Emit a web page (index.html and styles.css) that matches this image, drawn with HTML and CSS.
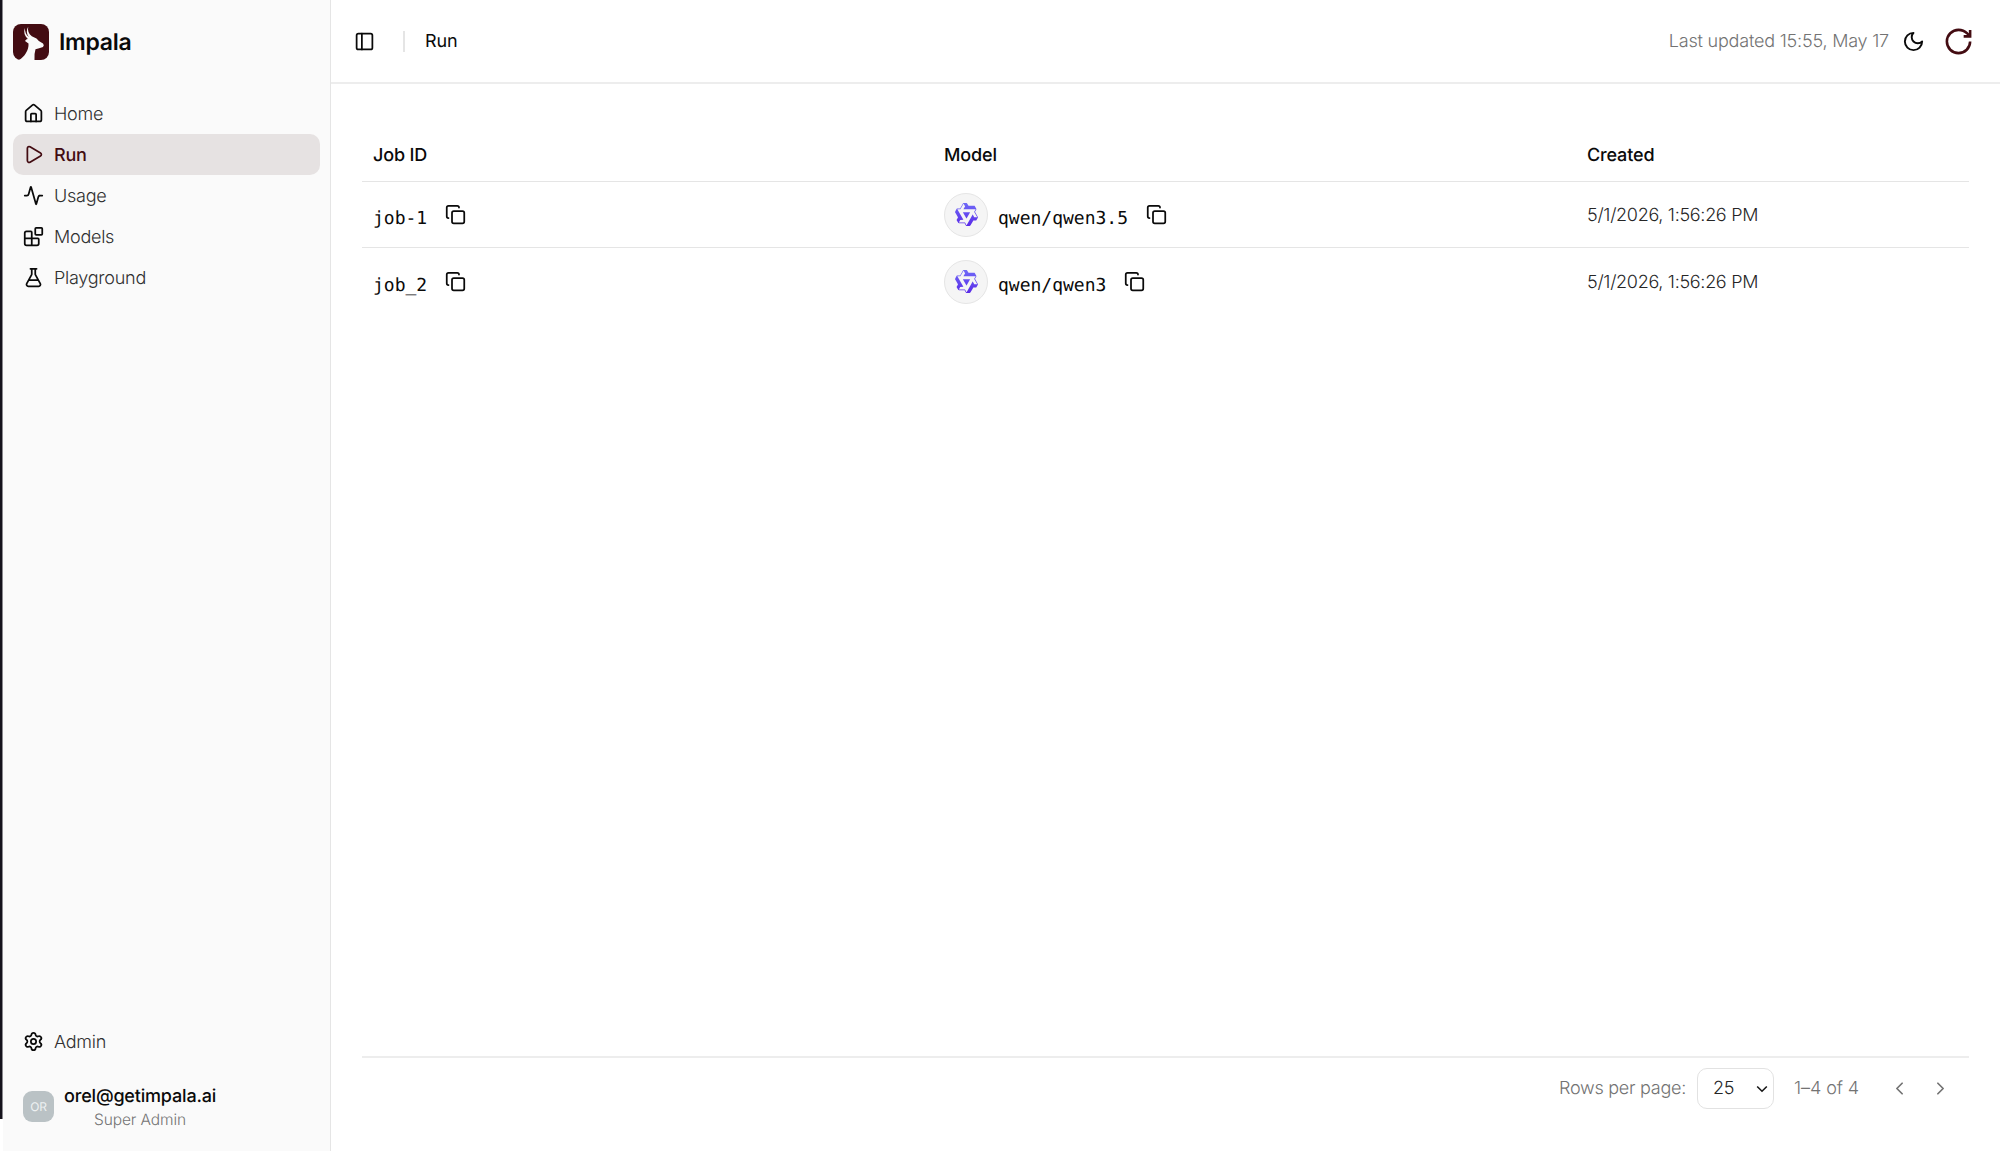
FILE: index.html
```html
<!DOCTYPE html>
<html lang="en">
<head>
<meta charset="utf-8">
<title>Impala – Run</title>
<link rel="stylesheet" href="styles.css">
</head>
<body>
<svg class="defs" width="0" height="0">
  <symbol id="copy" viewBox="0 0 24 24"><rect x="8" y="8" width="14" height="14" rx="2"/><path d="M4 16c-1.1 0-2-.9-2-2V4c0-1.1.9-2 2-2h10c1.1 0 2 .9 2 2"/></symbol>
  <symbol id="qwen" viewBox="0 0 24 24"><path d="M12.604 1.34c.393.69.784 1.382 1.174 2.075a.18.18 0 00.157.091h5.552c.174 0 .322.11.446.327l1.454 2.57c.19.337.24.478.024.837-.26.43-.513.864-.76 1.3l-.367.658c-.106.196-.223.28-.04.512l2.652 4.637c.172.301.111.494-.043.77-.437.785-.882 1.564-1.335 2.34-.159.272-.352.375-.68.37-.777-.016-1.552-.01-2.327.016a.099.099 0 00-.081.05 575.097 575.097 0 01-2.705 4.74c-.169.293-.38.363-.725.364-.997.003-2.002.004-3.017.002a.537.537 0 01-.465-.271l-1.335-2.323a.09.09 0 00-.083-.049H4.982c-.285.03-.553-.001-.805-.092l-1.603-2.77a.543.543 0 01-.002-.54l1.207-2.12a.198.198 0 000-.197 550.951 550.951 0 01-1.875-3.272l-.79-1.395c-.16-.31-.173-.496.095-.965.465-.813.927-1.625 1.387-2.436.132-.234.304-.334.584-.335a338.3 338.3 0 012.589-.001.124.124 0 00.107-.063l2.806-4.895a.488.488 0 01.422-.246c.524-.001 1.053 0 1.583-.006L11.704 1c.341-.003.724.032.9.34zm-3.432.403a.06.06 0 00-.052.03L6.254 6.788a.157.157 0 01-.135.078H3.253c-.056 0-.07.025-.041.074l5.81 10.156c.025.042.013.062-.034.063l-2.795.015a.218.218 0 00-.2.116l-1.32 2.31c-.044.078-.021.118.068.118l5.716.008c.046 0 .08.02.104.061l1.403 2.454c.046.081.092.082.139 0l5.006-8.76.783-1.382a.055.055 0 01.096 0l1.424 2.53a.122.122 0 00.107.062l2.763-.02a.04.04 0 00.035-.02.041.041 0 000-.04l-2.9-5.086a.108.108 0 010-.113l.293-.507 1.12-1.977c.024-.041.012-.062-.035-.062H9.2c-.059 0-.073-.026-.043-.077l1.434-2.505a.107.107 0 000-.114L9.225 1.774a.06.06 0 00-.053-.031zm6.29 8.02c.046 0 .058.02.034.06l-.832 1.465-2.613 4.585a.056.056 0 01-.05.029.058.058 0 01-.05-.029L8.498 9.841c-.02-.034-.01-.052.028-.054l.216-.012 6.722-.012z"/></symbol>
  <linearGradient id="violet" x1="0" y1="0" x2="0" y2="1"><stop offset="0" stop-color="#6f69f7"/><stop offset="1" stop-color="#5a2be8"/></linearGradient>
</svg>
<div class="app">
  <div class="edge"></div>
  <aside class="sidebar">
    <div class="brand">
      <svg class="logo" viewBox="0 0 36 36"><rect width="36" height="36" rx="8" fill="#430c12"/><path fill="#fafafa" d="M15.200 2.800C14.500 6.500 15.500 9.800 18.800 12.200L23.500 14.500Q25 17 30 19.500Q31.600 21 30 23Q26 24.600 22.500 25.200Q21 30 21.500 36H6C11.500 33 16 26 15.500 19.500L12 17Q13 15.200 14.800 15C11.500 12 10.500 8 11.800 4C12 8 13 11 15.800 13C13.400 10 13.200 6 15.200 2.800Z"/></svg>
      <span class="brand-name">Impala</span>
    </div>
    <nav class="nav">
      <a class="item"><svg class="icon" viewBox="0 0 24 24"><path d="M15 21v-8a1 1 0 0 0-1-1h-4a1 1 0 0 0-1 1v8"/><path d="M3 10a2 2 0 0 1 .709-1.528l7-6a2 2 0 0 1 2.582 0l7 6A2 2 0 0 1 21 10v9a2 2 0 0 1-2 2H5a2 2 0 0 1-2-2z"/></svg><span>Home</span></a>
      <a class="item active"><svg class="icon" viewBox="0 0 24 24"><path d="M5 5a2 2 0 0 1 3.008-1.728l11.997 6.998a2 2 0 0 1 .003 3.458l-12 7A2 2 0 0 1 5 19z"/></svg><span>Run</span></a>
      <a class="item"><svg class="icon" viewBox="0 0 24 24"><path d="M22 12h-2.480a2 2 0 0 0-1.930 1.460l-2.350 8.360a.25.25 0 0 1-.48 0L9.240 2.180a.25.25 0 0 0-.48 0l-2.350 8.360A2 2 0 0 1 4.490 12H2"/></svg><span>Usage</span></a>
      <a class="item"><svg class="icon" viewBox="0 0 24 24"><path d="M10 22V7a1 1 0 0 0-1-1H4a2 2 0 0 0-2 2v12a2 2 0 0 0 2 2h12a2 2 0 0 0 2-2v-5a1 1 0 0 0-1-1H2"/><rect x="14" y="2" width="8" height="8" rx="1"/></svg><span>Models</span></a>
      <a class="item"><svg class="icon" viewBox="0 0 24 24"><path d="M14 2v6a2 2 0 0 0 .245.960l5.510 10.080A2 2 0 0 1 18 22H6a2 2 0 0 1-1.755-2.960l5.510-10.080A2 2 0 0 0 10 8V2M6.453 15h11.094M8.500 2h7"/></svg><span>Playground</span></a>
    </nav>
    <a class="item admin"><svg class="icon" viewBox="0 0 24 24"><path d="M9.671 4.136a2.340 2.340 0 0 1 4.659 0 2.340 2.340 0 0 0 3.319 1.915 2.340 2.340 0 0 1 2.330 4.033 2.340 2.340 0 0 0 0 3.831 2.340 2.340 0 0 1-2.330 4.033 2.340 2.340 0 0 0-3.319 1.915 2.340 2.340 0 0 1-4.659 0 2.340 2.340 0 0 0-3.320-1.915 2.340 2.340 0 0 1-2.330-4.033 2.340 2.340 0 0 0 0-3.831A2.340 2.340 0 0 1 6.350 6.051a2.340 2.340 0 0 0 3.319-1.915"/><circle cx="12" cy="12" r="3"/></svg><span>Admin</span></a>
    <div class="user">
      <div class="avatar">OR</div>
      <div class="who"><span class="email">orel@getimpala.ai</span><span class="role">Super Admin</span></div>
    </div>
  </aside>
  <main class="main">
    <header class="top">
      <svg class="icon" viewBox="0 0 24 24"><rect x="3" y="3" width="18" height="18" rx="2"/><path d="M9 3v18"/></svg>
      <span class="sep"></span>
      <span class="crumb">Run</span>
      <span class="updated">Last updated 15:55, May 17</span>
      <svg class="icon moon" viewBox="0 0 24 24"><path d="M12 3a6 6 0 0 0 9 9 9 9 0 1 1-9-9Z"/></svg>
      <svg class="refresh" viewBox="0 0 24 24"><path d="M21 12a9 9 0 1 1-9-9c2.520 0 4.930 1 6.740 2.740L21 8"/><path d="M21 3v5h-5"/></svg>
    </header>
    <section class="content">
      <div class="table">
        <div class="row head"><div>Job ID</div><div>Model</div><div>Created</div></div>
        <div class="row">
          <div class="cell"><code>job-1</code><svg class="icon"><use href="#copy"/></svg></div>
          <div class="cell"><span class="badge"><svg><use href="#qwen"/></svg></span><code>qwen/qwen3.5</code><svg class="icon"><use href="#copy"/></svg></div>
          <div class="cell date">5/1/2026, 1:56:26 PM</div>
        </div>
        <div class="row last">
          <div class="cell"><code>job_2</code><svg class="icon"><use href="#copy"/></svg></div>
          <div class="cell"><span class="badge"><svg><use href="#qwen"/></svg></span><code>qwen/qwen3</code><svg class="icon"><use href="#copy"/></svg></div>
          <div class="cell date">5/1/2026, 1:56:26 PM</div>
        </div>
      </div>
      <footer class="pager">
        <span class="label">Rows per page:</span>
        <div class="select"><span>25</span><svg viewBox="0 0 12 8"><path d="M1.200 1.500 6 6.200l4.800-4.700"/></svg></div>
        <span class="range">1–4 of 4</span>
        <span class="step"><svg class="icon" viewBox="0 0 24 24"><path d="m15 18-6-6 6-6"/></svg></span>
        <span class="step"><svg class="icon" viewBox="0 0 24 24"><path d="m9 18 6-6-6-6"/></svg></span>
      </footer>
    </section>
  </main>
</div>
</body>
</html>
```
FILE: styles.css
```css
* { box-sizing: border-box; }
body {
  margin: 0;
  background: #fff;
  color: #0a0a0a;
  font-family: Inter, "Liberation Sans", sans-serif;
  font-size: 18px;
  line-height: 26px;
  font-weight: 300;
  letter-spacing: -0.25px;
  text-rendering: geometricPrecision;
}
.defs { display: block; }
.app { display: flex; width: 2000px; height: 1151px; overflow: hidden; }
.edge { width: 3px; height: 1119px; flex: none; background: #15131c; border-right: 1px solid #8a898e; }
.sidebar {
  width: 328px;
  flex: none;
  display: flex;
  flex-direction: column;
  background: #fafafa;
  border-right: 1px solid #e5e5e5;
  padding: 0 10px 0 10px;
}
.icon {
  width: 21px;
  height: 21px;
  flex: none;
  fill: none;
  stroke: currentColor;
  stroke-width: 2;
  stroke-linecap: round;
  stroke-linejoin: round;
}
.brand { display: flex; align-items: center; gap: 10px; height: 83px; }
.logo { width: 36px; height: 36px; }
.brand-name { font-size: 23px; font-weight: 600; letter-spacing: -0.3px; }
.nav { flex: 1; padding-top: 10px; }
.item { display: flex; align-items: center; gap: 10px; height: 41px; padding-left: 10px; border-radius: 10px; color: #0a0a0a; }
.item span { color: #303030; padding-top: 2px; }
.item.active, .item.active span { color: #430c12; font-weight: 500; }
.active { background: #e6e2e2; }
.admin { flex: none; }
.user { display: flex; align-items: center; gap: 10px; height: 89px; padding: 0 0 1px 10px; }
.avatar {
  width: 31px; height: 31px; border-radius: 9px;
  background: #bac2c5; color: #eef1f2;
  font-size: 12px; font-weight: 400; line-height: 31px; text-align: center;
}
.who { display: flex; flex-direction: column; align-items: center; padding-top: 3px; }
.email { font-weight: 500; line-height: 23px; letter-spacing: -0.18px; }
.role { font-size: 15.5px; line-height: 23px; color: #737373; letter-spacing: -0.1px; }
.main { flex: 1; display: flex; flex-direction: column; min-width: 0; }
.top { display: flex; align-items: center; height: 84px; padding: 0 26px 0 23px; border-bottom: 2px solid #ededed; }
.sep { width: 2px; height: 21px; margin: 0 20px 0 28px; background: #e5e5e5; }
.crumb { font-weight: 400; padding-top: 2px; letter-spacing: -0.1px; }
.updated { margin-left: auto; padding-top: 2px; color: #737373; letter-spacing: -0.2px; }
.moon { width: 23px; height: 23px; margin-left: 13px; }
.refresh { width: 31px; height: 31px; margin-left: 18px; fill: none; stroke: #430c12; stroke-width: 2; }
.content { flex: 1; display: flex; flex-direction: column; padding: 46px 31px 0; }
.table { flex: 1; }
.row { display: grid; grid-template-columns: 571px 643px 1fr; height: 66px; border-bottom: 1px solid #e5e5e5; align-items: center; padding-left: 11px; }
.head { height: 52px; font-weight: 500; letter-spacing: -0.15px; }
.head div { padding-top: 1px; }
.last { border-bottom: 0; height: 67px; }
.cell { display: flex; align-items: center; }
.cell code { font: 400 18px/26px "DejaVu Sans Mono", "Liberation Mono", monospace; letter-spacing: 0; padding-top: 9px; margin-right: 18px; }
.badge { width: 44px; height: 44px; margin-right: 10px; border: 1px solid #e5e5e5; border-radius: 50%; background: #f5f5f5; display: flex; align-items: center; justify-content: center; }
.badge svg { width: 25px; height: 25px; fill: url(#violet); }
.date { color: #262626; letter-spacing: -0.3px; padding-top: 2px; }
.pager { display: flex; align-items: center; height: 95px; padding: 0 8px 32px 0; border-top: 2px solid #ededed; justify-content: flex-end; color: #737373; }
.select { display: flex; align-items: center; justify-content: space-between; width: 77px; height: 41px; margin: 0 20px 0 11px; padding: 0 5px 0 15px; border: 1px solid #e2e2e2; border-radius: 10px; color: #262626; }
.select svg { width: 12px; height: 8px; fill: none; stroke: #171717; stroke-width: 1.6; }
.label, .range { padding-top: 1px; }
.range { margin-right: 20px; letter-spacing: -0.1px; }
.step { display: flex; width: 41px; justify-content: center; }
.step .icon { stroke-width: 2; }
```
